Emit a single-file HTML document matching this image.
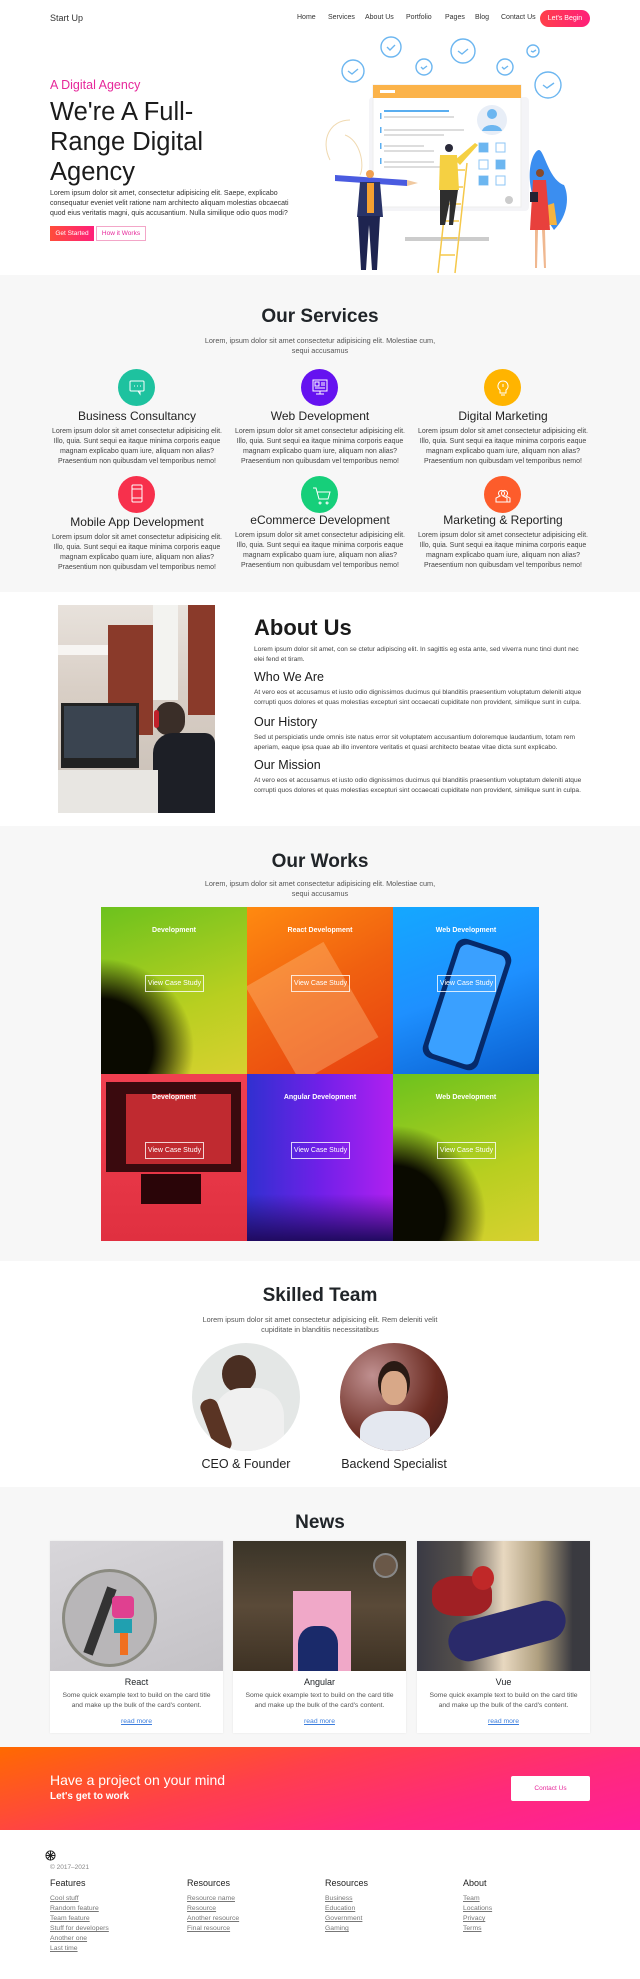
<!DOCTYPE html>
<html><head><meta charset="utf-8">
<style>
*{box-sizing:border-box;margin:0;padding:0}
body{width:640px;height:1979px;position:relative;font-family:"Liberation Sans",sans-serif;color:#212529;background:#fff;overflow:hidden}
.a{position:absolute}
.c{text-align:center}
.sec{position:absolute;left:0;width:640px}
.h2{font-size:19px;font-weight:bold;color:#212529}
.sm{font-size:7.3px;line-height:10px;color:#555}
.nav span{position:absolute;top:14px;font-size:7px;color:#333}
.ic{position:absolute;width:37px;height:37px;border-radius:50%}
.st{position:absolute;width:180px;font-size:12px;text-align:center;color:#222}
.sp{position:absolute;width:180px;font-size:7px;line-height:10px;text-align:center;color:#444}
.cell{position:absolute;width:146px;height:167px;overflow:hidden}
.cell .l{position:absolute;top:20px;width:100%;text-align:center;color:#fff;font-size:7px;font-weight:bold}
.cell .b{position:absolute;left:44px;top:68px;width:59px;height:17px;border:1px solid rgba(255,255,255,.8);color:#fff;font-size:7px;line-height:15px;text-align:center}
.card{position:absolute;top:1541px;width:173px;height:192px;background:#fff;box-shadow:0 0 2px rgba(0,0,0,.08)}
.card .im{position:absolute;left:0;top:0;width:173px;height:130px;overflow:hidden}
.card .t{position:absolute;top:136px;width:100%;text-align:center;font-size:9px}
.card .p{position:absolute;top:150px;left:10px;right:10px;text-align:center;font-size:6.8px;line-height:10px;color:#555}
.card .r{position:absolute;top:177px;width:100%;text-align:center;font-size:6.8px;color:#3b7ddd;text-decoration:underline}
.fh{position:absolute;top:1878px;font-size:9px;color:#222}
.fl{position:absolute;font-size:6.8px;line-height:10px;color:#777;text-decoration:underline}
.ap{position:absolute;left:254px;width:340px;font-size:6.6px;line-height:10px;color:#444}
</style></head><body>

<!-- NAV -->
<div class="a" style="left:50px;top:13px;font-size:9px;color:#333">Start Up</div>
<div class="nav">
<span style="left:297px">Home</span><span style="left:328px">Services</span><span style="left:365px">About Us</span><span style="left:406px">Portfolio</span><span style="left:445px">Pages</span><span style="left:475px">Blog</span><span style="left:501px">Contact Us</span>
</div>
<div class="a" style="left:540px;top:10px;width:50px;height:17px;border-radius:9px;background:linear-gradient(90deg,#ff3f4a,#ff1f7a);color:#fff;font-size:7px;line-height:17px;text-align:center">Let's Begin</div>

<!-- HERO -->
<div class="a" style="left:50px;top:78px;font-size:12.5px;color:#e6279a">A Digital Agency</div>
<div class="a" style="left:50px;top:97px;font-size:25.5px;line-height:30px;color:#1b1b1b">We're A Full-<br>Range Digital<br>Agency</div>
<div class="a" style="left:50px;top:189px;width:255px;font-size:7px;line-height:10px;color:#333">Lorem ipsum dolor sit amet, consectetur adipisicing elit. Saepe, explicabo consequatur eveniet velit ratione nam architecto aliquam molestias obcaecati quod eius veritatis magni, quis accusantium. Nulla similique odio quos modi?</div>
<div class="a" style="left:50px;top:226px;width:44px;height:15px;background:linear-gradient(90deg,#ff4d3a,#ff1f7a);color:#fff;font-size:6.5px;line-height:15px;text-align:center">Get Started</div>
<div class="a" style="left:96px;top:226px;width:50px;height:15px;border:1px solid #f3a6c8;color:#e6279a;font-size:6.5px;line-height:13px;text-align:center">How it Works</div>

<svg class="a" style="left:320px;top:30px" width="280" height="250" viewBox="320 30 280 250">
<g fill="none" stroke="#6cb6f0" stroke-width="1.4">
<circle cx="353" cy="71" r="11"/><circle cx="391" cy="47" r="10"/><circle cx="424" cy="67" r="8"/><circle cx="463" cy="51" r="12"/><circle cx="505" cy="67" r="8"/><circle cx="533" cy="51" r="6"/><circle cx="548" cy="85" r="13"/>
<path d="M348 71l4 3 6-5M387 47l3 3 5-5M421 67l2 2 4-3M458 51l4 3 6-5M502 67l2 2 4-3M531 51l2 1 3-2M543 85l4 3 7-5"/>
</g>
<path d="M350 120c-20 0-30 20-20 40M345 135c15 5 20 30 15 40" stroke="#f0d9b0" fill="none"/>
<rect x="369" y="97" width="160" height="114" rx="4" fill="#f4f4f7"/>
<rect x="373" y="85" width="148" height="122" fill="#fff" stroke="#eee"/>
<rect x="373" y="85" width="148" height="13" fill="#fbb34a"/>
<rect x="380" y="90" width="15" height="3" fill="#fff"/>
<g fill="#5aaef0"><rect x="384" y="110" width="65" height="2"/><rect x="380" y="113" width="1.5" height="6"/><rect x="380" y="127" width="1.5" height="6"/><rect x="380" y="143" width="1.5" height="6"/><rect x="380" y="158" width="1.5" height="6"/></g>
<g fill="#ddd"><rect x="384" y="116" width="70" height="2"/><rect x="384" y="129" width="80" height="2"/><rect x="384" y="134" width="60" height="2"/><rect x="384" y="145" width="40" height="2"/><rect x="384" y="150" width="50" height="2"/><rect x="384" y="161" width="50" height="2"/><rect x="384" y="166" width="60" height="2"/></g>
<circle cx="492" cy="120" r="15" fill="#e8eef7"/><circle cx="492" cy="114" r="5" fill="#6cb6f0"/><path d="M482 131c2-8 18-8 20 0z" fill="#6cb6f0"/>
<g stroke="#8cc6f5" fill="none"><rect x="479" y="143" width="9" height="9"/><rect x="496" y="143" width="9" height="9"/><rect x="479" y="160" width="9" height="9"/><rect x="496" y="160" width="9" height="9"/><rect x="479" y="176" width="9" height="9"/><rect x="496" y="176" width="9" height="9"/></g>
<g fill="#6cb6f0"><rect x="479" y="143" width="9" height="9"/><rect x="496" y="160" width="9" height="9"/><rect x="479" y="176" width="9" height="9"/></g>
<circle cx="509" cy="200" r="4" fill="#ccc"/>
<rect x="405" y="237" width="84" height="4" fill="#ccc"/>
<path d="M534 200c-10-30 0-50 5-50s10 30 25 35c5 10 5 30-10 45z" fill="#3b8ef0"/>
<path d="M548 205l6-2 3 22h-10z" fill="#f5b440"/>
<g stroke="#f5c84a" stroke-width="1.5"><path d="M438 273l12-110M455 273l12-110M440 255h15M442 238h15M444 221h15M446 204h15M448 187h15M450 170h15"/></g>
<circle cx="449" cy="148" r="4" fill="#2a2a3a"/>
<path d="M440 155h17l2 35h-20z" fill="#f5d042"/><path d="M455 160l20-17 3 2-18 20z" fill="#f5d042"/>
<path d="M440 190h18l-5 35h-4l1-25-5 25h-5z" fill="#2e2e2e"/>
<path d="M335 175l72 5v6l-72-5z" fill="#4a5be0"/><path d="M407 180l11 3-11 3z" fill="#f0c9a0"/>
<circle cx="370" cy="174" r="4" fill="#f0a050"/>
<path d="M360 182h20l3 35h-26z" fill="#2a3468"/><rect x="367" y="183" width="7" height="30" fill="#f5a030"/>
<path d="M358 216h22l-3 54h-5l-3-45-3 45h-5z" fill="#1e2450"/>
<circle cx="540" cy="173" r="4" fill="#8a4a2a"/>
<path d="M533 180h13l4 50h-20z" fill="#e8403c"/>
<path d="M535 230h3l-1 38h-2zM542 230h3l1 38h-2z" fill="#f0b890"/>
<rect x="530" y="192" width="8" height="10" fill="#223"/>
</svg>

<!-- SERVICES -->
<div class="sec" style="top:275px;height:317px;background:#f7f7f7"></div>
<div class="a h2 c" style="left:0;width:640px;top:306px">Our Services</div>
<div class="a sm c" style="left:200px;width:240px;top:336px">Lorem, ipsum dolor sit amet consectetur adipisicing elit. Molestiae cum, sequi accusamus</div>

<div class="ic" style="left:118px;top:369px;background:#1ec29f"></div>
<div class="ic" style="left:301px;top:369px;background:#6512f0"></div>
<div class="ic" style="left:484px;top:369px;background:#ffb400"></div>
<div class="ic" style="left:118px;top:476px;background:#f7304c"></div>
<div class="ic" style="left:301px;top:476px;background:#16cf7a"></div>
<div class="ic" style="left:484px;top:476px;background:#fd5c2b"></div>
<svg class="a" style="left:0;top:360px" width="640" height="160" fill="none" stroke="#fff" stroke-width="1">
<rect x="130" y="21" width="14" height="10" rx="1"/><path d="M138 31l2 3v-3"/><path d="M134 26h1M137 26h1M140 26h1"/>
<rect x="313" y="20" width="14" height="11"/><path d="M320 31v3M316 34h8M315 22h4v4h-4zM321 23h4M321 25h4M315 28h10"/>
<path d="M503 21a5 5 0 0 1 3 9v3h-6v-3a5 5 0 0 1 3-9zM501 35h4M503 27v-3"/>
<rect x="132" y="125" width="10" height="17" rx="1"/><path d="M132 138h10M132 129h10"/>
<path d="M313 128h3l3 11h9l2-7h-13M320 142a1 1 0 1 0 .1 0M327 142a1 1 0 1 0 .1 0"/>
<path d="M496 142v-4l4-2a3 3 0 1 1 3 0l4 2v4zM503 136a3 3 0 1 1 3 0l4 2v4h-3"/>
</svg>

<div class="st" style="left:47px;top:409px">Business Consultancy</div>
<div class="st" style="left:230px;top:409px">Web Development</div>
<div class="st" style="left:413px;top:409px">Digital Marketing</div>
<div class="sp" style="left:47px;top:427px">Lorem ipsum dolor sit amet consectetur adipisicing elit. Illo, quia. Sunt sequi ea itaque minima corporis eaque magnam explicabo quam iure, aliquam non alias? Praesentium non quibusdam vel temporibus nemo!</div>
<div class="sp" style="left:230px;top:427px">Lorem ipsum dolor sit amet consectetur adipisicing elit. Illo, quia. Sunt sequi ea itaque minima corporis eaque magnam explicabo quam iure, aliquam non alias? Praesentium non quibusdam vel temporibus nemo!</div>
<div class="sp" style="left:413px;top:427px">Lorem ipsum dolor sit amet consectetur adipisicing elit. Illo, quia. Sunt sequi ea itaque minima corporis eaque magnam explicabo quam iure, aliquam non alias? Praesentium non quibusdam vel temporibus nemo!</div>
<div class="st" style="left:47px;top:515px">Mobile App Development</div>
<div class="st" style="left:230px;top:513px">eCommerce Development</div>
<div class="st" style="left:413px;top:513px">Marketing &amp; Reporting</div>
<div class="sp" style="left:47px;top:533px">Lorem ipsum dolor sit amet consectetur adipisicing elit. Illo, quia. Sunt sequi ea itaque minima corporis eaque magnam explicabo quam iure, aliquam non alias? Praesentium non quibusdam vel temporibus nemo!</div>
<div class="sp" style="left:230px;top:531px">Lorem ipsum dolor sit amet consectetur adipisicing elit. Illo, quia. Sunt sequi ea itaque minima corporis eaque magnam explicabo quam iure, aliquam non alias? Praesentium non quibusdam vel temporibus nemo!</div>
<div class="sp" style="left:413px;top:531px">Lorem ipsum dolor sit amet consectetur adipisicing elit. Illo, quia. Sunt sequi ea itaque minima corporis eaque magnam explicabo quam iure, aliquam non alias? Praesentium non quibusdam vel temporibus nemo!</div>

<!-- ABOUT -->
<div class="a" style="left:58px;top:605px;width:157px;height:208px;overflow:hidden;background:linear-gradient(180deg,#e8e2dc 0%,#d9cfc6 40%,#c7beb5 100%)">
 <div class="a" style="left:50px;top:20px;width:45px;height:110px;background:#8a3a2a"></div>
 <div class="a" style="left:130px;top:0;width:27px;height:110px;background:#8a3a2a"></div>
 <div class="a" style="left:95px;top:0;width:25px;height:95px;background:#f3f3f0"></div>
 <div class="a" style="left:0;top:40px;width:50px;height:10px;background:#f7f5f2"></div>
 <div class="a" style="left:3px;top:98px;width:78px;height:65px;background:#222"></div>
 <div class="a" style="left:6px;top:101px;width:72px;height:52px;background:#3a4450"></div>
 <div class="a" style="left:97px;top:97px;width:30px;height:33px;border-radius:45% 45% 40% 40%;background:#3a2e28"></div>
 <div class="a" style="left:96px;top:105px;width:5px;height:18px;background:#c0202a;border-radius:3px"></div>
 <div class="a" style="left:95px;top:128px;width:62px;height:80px;border-radius:20px 10px 0 0;background:#1d1f26"></div>
 <div class="a" style="left:0;top:165px;width:100px;height:43px;background:#e8e6e2"></div>
</div>
<div class="a" style="left:254px;top:615px;font-size:22px;font-weight:bold;color:#1b1b1b">About Us</div>
<div class="ap" style="top:645px;width:335px">Lorem ipsum dolor sit amet, con se ctetur adipiscing elit. In sagittis eg esta ante, sed viverra nunc tinci dunt nec elei fend et tiram.</div>
<div class="a" style="left:254px;top:670px;font-size:12.5px;color:#1b1b1b">Who We Are</div>
<div class="ap" style="top:688px">At vero eos et accusamus et iusto odio dignissimos ducimus qui blanditiis praesentium voluptatum deleniti atque corrupti quos dolores et quas molestias excepturi sint occaecati cupiditate non provident, similique sunt in culpa.</div>
<div class="a" style="left:254px;top:715px;font-size:12.5px;color:#1b1b1b">Our History</div>
<div class="ap" style="top:733px">Sed ut perspiciatis unde omnis iste natus error sit voluptatem accusantium doloremque laudantium, totam rem aperiam, eaque ipsa quae ab illo inventore veritatis et quasi architecto beatae vitae dicta sunt explicabo.</div>
<div class="a" style="left:254px;top:758px;font-size:12.5px;color:#1b1b1b">Our Mission</div>
<div class="ap" style="top:776px">At vero eos et accusamus et iusto odio dignissimos ducimus qui blanditiis praesentium voluptatum deleniti atque corrupti quos dolores et quas molestias excepturi sint occaecati cupiditate non provident, similique sunt in culpa.</div>

<!-- WORKS -->
<div class="sec" style="top:826px;height:435px;background:#f7f7f7"></div>
<div class="a h2 c" style="left:0;width:640px;top:851px">Our Works</div>
<div class="a sm c" style="left:200px;width:240px;top:879px">Lorem, ipsum dolor sit amet consectetur adipisicing elit. Molestiae cum, sequi accusamus</div>

<div class="cell" style="left:101px;top:907px;background:radial-gradient(ellipse at 0% 85%,#0a0a00 0,#0a0a00 25%,transparent 45%),linear-gradient(160deg,#6cc21e,#b8cf20 60%,#d8d030)"><div class="l">Development</div><div class="b">View Case Study</div></div>
<div class="cell" style="left:247px;top:907px;background:linear-gradient(150deg,#ff8a10,#f06010 50%,#e84010)"><div class="a" style="left:20px;top:50px;width:90px;height:110px;background:rgba(255,200,140,.35);transform:rotate(-30deg)"></div><div class="l">React Development</div><div class="b">View Case Study</div></div>
<div class="cell" style="left:393px;top:907px;background:linear-gradient(160deg,#14a8ff,#1e90ff 50%,#0a5fd0)"><div class="a" style="left:45px;top:35px;width:58px;height:125px;border-radius:10px;background:#062a6a;transform:rotate(18deg)"></div><div class="a" style="left:50px;top:40px;width:48px;height:115px;border-radius:8px;background:#3aa0ff;transform:rotate(18deg)"></div><div class="l">Web Development</div><div class="b">View Case Study</div></div>
<div class="cell" style="left:101px;top:1074px;background:linear-gradient(180deg,#f04050,#e03040)"><div class="a" style="left:5px;top:8px;width:135px;height:90px;background:#3a0a0e"></div><div class="a" style="left:25px;top:20px;width:105px;height:70px;background:#c02a30"></div><div class="a" style="left:40px;top:100px;width:60px;height:30px;background:#2a0508"></div><div class="l">Development</div><div class="b">View Case Study</div></div>
<div class="cell" style="left:247px;top:1074px;background:linear-gradient(90deg,#3030d0,#7020e8 50%,#b020f0)"><div class="a" style="left:0;top:120px;width:146px;height:47px;background:linear-gradient(180deg,transparent,#200a60)"></div><div class="l">Angular Development</div><div class="b">View Case Study</div></div>
<div class="cell" style="left:393px;top:1074px;background:radial-gradient(ellipse at 0% 85%,#0a0a00 0,#0a0a00 25%,transparent 45%),linear-gradient(160deg,#6cc21e,#b8cf20 60%,#d8d030)"><div class="l">Web Development</div><div class="b">View Case Study</div></div>

<!-- TEAM -->
<div class="a h2 c" style="left:0;width:640px;top:1285px">Skilled Team</div>
<div class="a sm c" style="left:195px;width:250px;top:1315px">Lorem ipsum dolor sit amet consectetur adipisicing elit. Rem deleniti velit cupiditate in blanditiis necessitatibus</div>
<div class="a" style="left:192px;top:1343px;width:108px;height:108px;border-radius:50%;overflow:hidden;background:#e4e7e6">
 <div class="a" style="left:30px;top:12px;width:34px;height:38px;border-radius:50%;background:#4a2e22"></div>
 <div class="a" style="left:22px;top:45px;width:70px;height:70px;border-radius:40% 40% 0 0;background:#f0f0f0"></div>
 <div class="a" style="left:15px;top:55px;width:18px;height:55px;background:#5a3424;border-radius:8px;transform:rotate(-20deg)"></div>
</div>
<div class="a" style="left:340px;top:1343px;width:108px;height:108px;border-radius:50%;overflow:hidden;background:radial-gradient(circle at 30% 30%,#c09090,#6a2a20 60%,#3a1a18)">
 <div class="a" style="left:38px;top:18px;width:32px;height:42px;border-radius:50%;background:#2a1a14"></div>
 <div class="a" style="left:41px;top:28px;width:26px;height:34px;border-radius:45%;background:#d8a888"></div>
 <div class="a" style="left:20px;top:68px;width:70px;height:50px;border-radius:40% 40% 0 0;background:#e4e8f0"></div>
</div>
<div class="a c" style="left:146px;width:200px;top:1457px;font-size:12.5px;color:#222">CEO &amp; Founder</div>
<div class="a c" style="left:294px;width:200px;top:1457px;font-size:12.5px;color:#222">Backend Specialist</div>

<!-- NEWS -->
<div class="sec" style="top:1487px;height:260px;background:#f7f7f7"></div>
<div class="a h2 c" style="left:0;width:640px;top:1512px">News</div>
<div class="card" style="left:50px"><div class="im" style="background:linear-gradient(160deg,#d8d6da,#c4c2c6)"><div class="a" style="left:12px;top:28px;width:95px;height:98px;border-radius:50%;border:3px solid #8a8a80;background:#b8b6b8"></div><div class="a" style="left:45px;top:45px;width:10px;height:70px;background:#333;transform:rotate(20deg)"></div><div class="a" style="left:62px;top:55px;width:22px;height:22px;background:#e04090;border-radius:4px"></div><div class="a" style="left:64px;top:78px;width:18px;height:14px;background:#20a0b0"></div><div class="a" style="left:70px;top:92px;width:8px;height:22px;background:#f07020"></div></div><div class="t">React</div><div class="p">Some quick example text to build on the card title and make up the bulk of the card's content.</div><div class="r">read more</div></div>
<div class="card" style="left:233px"><div class="im" style="background:linear-gradient(180deg,#3a3428,#5a4a38 50%,#3e3224)"><div class="a" style="left:60px;top:50px;width:58px;height:80px;background:#f0a8c8"></div><div class="a" style="left:65px;top:85px;width:40px;height:45px;border-radius:40% 40% 0 0;background:#1a2a6a"></div><div class="a" style="left:140px;top:12px;width:25px;height:25px;border-radius:50%;background:#6a5848;border:2px solid #888"></div></div><div class="t">Angular</div><div class="p">Some quick example text to build on the card title and make up the bulk of the card's content.</div><div class="r">read more</div></div>
<div class="card" style="left:417px"><div class="im" style="background:linear-gradient(90deg,#3a3a44,#55504c 25%,#e8d8c0 50%,#b0a080 70%,#3a3a40 90%)"><div class="a" style="left:15px;top:35px;width:60px;height:40px;border-radius:40%;background:#a02024"></div><div class="a" style="left:30px;top:70px;width:120px;height:40px;border-radius:30px;background:#2a2a6a;transform:rotate(-15deg)"></div><div class="a" style="left:55px;top:25px;width:22px;height:24px;border-radius:50%;background:#c02828"></div></div><div class="t">Vue</div><div class="p">Some quick example text to build on the card title and make up the bulk of the card's content.</div><div class="r">read more</div></div>

<!-- CTA -->
<div class="sec" style="top:1747px;height:83px;background:linear-gradient(165deg,#ff6a00 0%,#ff3f4c 40%,#ff2a7a 70%,#ff1f9a 100%)"></div>
<div class="a" style="left:50px;top:1772px;font-size:14px;color:#fff">Have a project on your mind</div>
<div class="a" style="left:50px;top:1791px;font-size:10px;font-weight:bold;color:#fff">Let's get to work</div>
<div class="a" style="left:511px;top:1776px;width:79px;height:25px;background:#fff;border-radius:2px;color:#e6279a;font-size:6.5px;line-height:25px;text-align:center">Contact Us</div>

<!-- FOOTER -->
<svg class="a" style="left:45px;top:1850px" width="11" height="11" viewBox="0 0 24 24" fill="none" stroke="#222" stroke-width="2.2"><circle cx="12" cy="12" r="10"/><path d="M12 2v20M2 12h20M5 5l14 14M19 5L5 19"/></svg>
<div class="a" style="left:50px;top:1864px;font-size:6.5px;color:#888">© 2017–2021</div>
<div class="fh" style="left:50px">Features</div>
<div class="fh" style="left:187px">Resources</div>
<div class="fh" style="left:325px">Resources</div>
<div class="fh" style="left:463px">About</div>
<div class="fl" style="left:50px;top:1894px">Cool stuff<br>Random feature<br>Team feature<br>Stuff for developers<br>Another one<br>Last time</div>
<div class="fl" style="left:187px;top:1894px">Resource name<br>Resource<br>Another resource<br>Final resource</div>
<div class="fl" style="left:325px;top:1894px">Business<br>Education<br>Government<br>Gaming</div>
<div class="fl" style="left:463px;top:1894px">Team<br>Locations<br>Privacy<br>Terms</div>
</body></html>
